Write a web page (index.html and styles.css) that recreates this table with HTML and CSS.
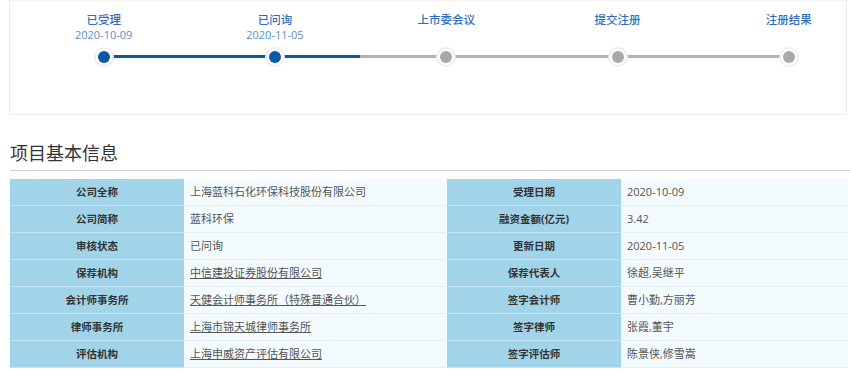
FILE: index.html
```html
<!DOCTYPE html>
<html lang="zh-CN">
<head>
<meta charset="utf-8">
<title>项目基本信息</title>
<link rel="stylesheet" href="styles.css">
</head>
<body>
<div class="progress-card">
  <div class="timeline">
    <div class="track"><div class="track-done"></div></div>
    <div class="step done">
      <div class="step-title">已受理</div>
      <div class="step-date">2020-10-09</div>
      <div class="dot"></div>
    </div>
    <div class="step done">
      <div class="step-title">已问询</div>
      <div class="step-date">2020-11-05</div>
      <div class="dot"></div>
    </div>
    <div class="step">
      <div class="step-title">上市委会议</div>
      <div class="step-date"></div>
      <div class="dot"></div>
    </div>
    <div class="step">
      <div class="step-title">提交注册</div>
      <div class="step-date"></div>
      <div class="dot"></div>
    </div>
    <div class="step">
      <div class="step-title">注册结果</div>
      <div class="step-date"></div>
      <div class="dot"></div>
    </div>
  </div>
</div>

<h2 class="section-title">项目基本信息</h2>

<table class="info-table">
  <colgroup>
    <col class="c-label"><col class="c-value1"><col class="c-label"><col class="c-value2">
  </colgroup>
  <tr><th>公司全称</th><td>上海蓝科石化环保科技股份有限公司</td><th>受理日期</th><td>2020-10-09</td></tr>
  <tr><th>公司简称</th><td>蓝科环保</td><th>融资金额(亿元)</th><td>3.42</td></tr>
  <tr><th>审核状态</th><td>已问询</td><th>更新日期</th><td>2020-11-05</td></tr>
  <tr><th>保荐机构</th><td><a href="#">中信建投证券股份有限公司</a></td><th>保荐代表人</th><td>徐超,吴继平</td></tr>
  <tr><th>会计师事务所</th><td><a href="#">天健会计师事务所（特殊普通合伙）</a></td><th>签字会计师</th><td>曹小勤,方丽芳</td></tr>
  <tr><th>律师事务所</th><td><a href="#">上海市锦天城律师事务所</a></td><th>签字律师</th><td>张霞,董宇</td></tr>
  <tr><th>评估机构</th><td><a href="#">上海申威资产评估有限公司</a></td><th>签字评估师</th><td>陈景侠,修雪嵩</td></tr>
</table>
</body>
</html>
```

FILE: styles.css
```css
html, body {
  margin: 0;
  padding: 0;
  background: #fff;
  font-family: "Open Sans", "Noto Sans CJK SC", sans-serif;
  color: #555;
}

.progress-card {
  margin-left: 9px;
  width: 836px;
  height: 113px;
  border: 1px solid #ececec;
  border-top-color: #f3f3f3;
  box-sizing: content-box;
}

.timeline {
  position: relative;
  display: grid;
  grid-template-columns: repeat(5, 171.3px);
  margin-left: 8px;
  padding-top: 10px;
}

.track {
  position: absolute;
  left: 85px;
  top: 53.5px;
  width: 686px;
  height: 3px;
  background: #b3b3b3;
}

.track-done {
  width: 257px;
  height: 3px;
  background: #0b58a4;
}

.step {
  display: flex;
  flex-direction: column;
  align-items: center;
  position: relative;
}

.step-title {
  font-size: 11.5px;
  line-height: 17px;
  height: 17px;
  font-weight: 500;
  color: #2f6fba;
}

.step-date {
  font-size: 11px;
  line-height: 14px;
  height: 14px;
  color: #5b8ec6;
}

.dot {
  margin-top: 9px;
  width: 12px;
  height: 12px;
  border-radius: 50%;
  background: #a9a9a9;
  box-shadow: 0 0 0 2px #fff, 0 0 0 4px #efefef;
  position: relative;
}

.step.done .dot {
  background: #0b58a4;
}

.section-title {
  margin: 25px 0 0 10px;
  padding-bottom: 6px;
  font-size: 18px;
  line-height: 24px;
  font-weight: 400;
  color: #333;
  border-bottom: 1px solid #cfcfcf;
  font-family: "Noto Sans CJK SC", sans-serif;
}

.info-table {
  margin: 8px 0 0 10px;
  border-collapse: collapse;
  table-layout: fixed;
  width: 838px;
}

.c-label { width: 174px; }
.c-value1 { width: 263px; }
.c-value2 { width: 227px; }

.info-table th,
.info-table td {
  height: 26px;
  padding: 0;
  border-bottom: 1px solid #e2eff4;
  font-size: 11px;
  line-height: 26px;
  white-space: nowrap;
  overflow: hidden;
}

.info-table th {
  background: #a2d4e9;
  color: #333;
  font-weight: 700;
  font-size: 10.5px;
  text-align: center;
  border-bottom-color: #c4e3f0;
}

.info-table td {
  background: #f3fbfe;
  color: #555;
  padding-left: 6px;
  text-align: left;
}

.info-table a {
  color: #555;
  text-decoration: underline;
}
```
